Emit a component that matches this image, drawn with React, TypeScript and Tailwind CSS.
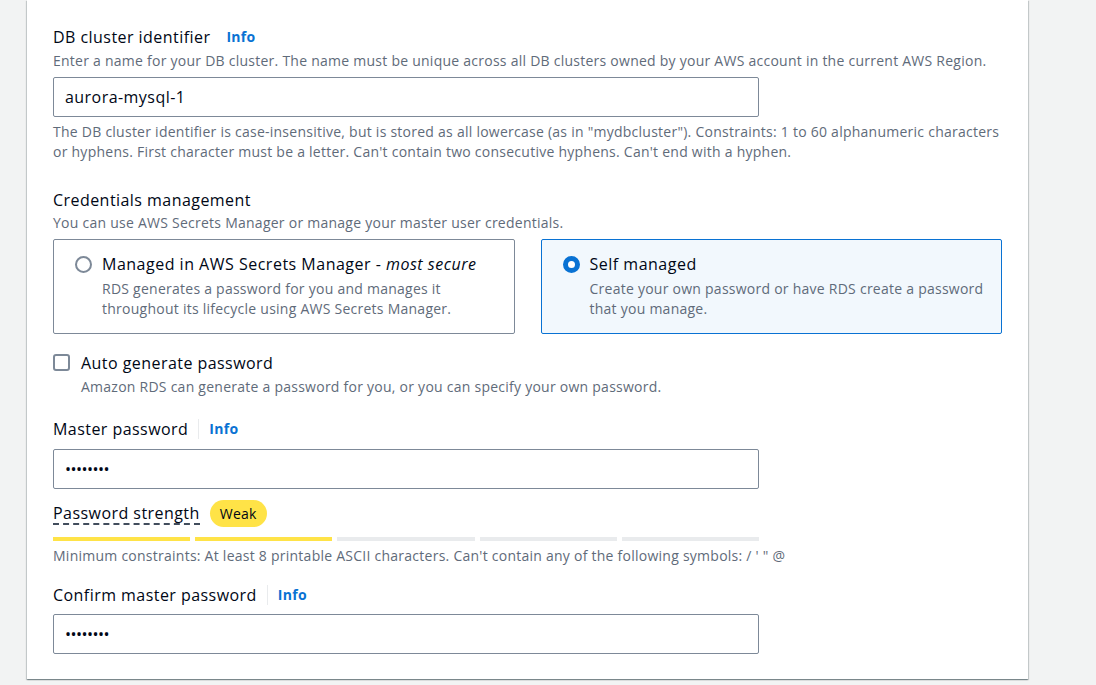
const font = { fontFamily: '"Open Sans", "Noto Sans", sans-serif' };

const Info = () => (
  <span className="text-[14px] font-bold tracking-[0.3px] text-[#0972d3] leading-[20px]">Info</span>
);

const Separator = () => <span className="mx-[10px] h-[20px] w-px bg-[#e9ebed]" />;

const PasswordInput = () => (
  <div className="flex h-[40px] w-[706px] items-center rounded-[2px] border border-[#7d8998] bg-white px-[11px]">
    <span className="text-[16px] leading-none tracking-[-0.5px] text-[#000716]">
      ••••••••
    </span>
  </div>
);

interface TileProps {
  selected: boolean;
  title: React.ReactNode;
  desc: string;
}

const Tile = ({ selected, title, desc }: TileProps) => (
  <div
    className={`flex h-[95px] flex-1 gap-[10px] rounded-[2px] border pl-[21px] pr-[12px] pt-[14px] ${
      selected ? "border-[#0972d3] bg-[#f2f8fd]" : "border-[#7d8998] bg-white"
    }`}>
    <div className="pt-[2px]">
      {selected ? (
        <span className="block h-[17px] w-[17px] rounded-full border-[5px] border-[#0972d3] bg-white" />
      ) : (
        <span className="block h-[17px] w-[17px] rounded-full border-2 border-[#7d8998] bg-white" />
      )}
    </div>
    <div className="flex flex-col">
      <p className="text-[16px] leading-[20px] tracking-[0.5px] text-[#000716]">{title}</p>
      <p className="mt-[5px] text-[14px] leading-[20px] tracking-[0.25px] text-[#5f6b7a]">{desc}</p>
    </div>
  </div>
);

export default function App() {
  const bars = [true, true, false, false, false];
  const label = "text-[16px] leading-[20px] tracking-[0.45px] text-[#000716]";
  const desc = "text-[14px] leading-[20px] tracking-[0.25px] text-[#5f6b7a]";

  return (
    <div className="min-h-[685px] bg-[#f2f3f3] pl-[27px] pr-[68px]" style={font}>
      <div className="bg-white px-[26px] pt-[26px] pb-[25px] shadow-[0_1px_1px_0_rgba(0,28,36,0.3),1px_1px_1px_0_rgba(0,28,36,0.15),-1px_1px_1px_0_rgba(0,28,36,0.15)]">
        {/* DB cluster identifier */}
        <div className="flex items-center gap-[16px]">
          <span className={`${label} leading-[22px]`}>DB cluster identifier</span>
          <Info />
        </div>
        <p className={`mt-[3px] ${desc}`}>
          Enter a name for your DB cluster. The name must be unique across all DB clusters owned by your AWS
          account in the current AWS Region.
        </p>
        <div className="mt-[6px] flex h-[40px] w-[706px] items-center rounded-[2px] border border-[#7d8998] px-[11px]">
          <span className="text-[16px] tracking-[0.45px] text-[#000716]">aurora-mysql-1</span>
        </div>
        <p className={`mt-[5px] ${desc}`}>
          The DB cluster identifier is case-insensitive, but is stored as all lowercase (as in "mydbcluster").
          Constraints: 1 to 60 alphanumeric characters or hyphens. First character must be a letter. Can't
          contain two consecutive hyphens. Can't end with a hyphen.
        </p>

        {/* Credentials management */}
        <p className={`mt-[28px] ${label}`}>Credentials management</p>
        <p className={`mt-[3px] ${desc}`}>
          You can use AWS Secrets Manager or manage your master user credentials.
        </p>
        <div className="mt-[6px] flex gap-[26px]">
          <Tile
            selected={false}
            title={
              <>
                Managed in AWS Secrets Manager - <i>most secure</i>
              </>
            }
            desc="RDS generates a password for you and manages it throughout its lifecycle using AWS Secrets Manager."
          />
          <Tile
            selected
            title="Self managed"
            desc="Create your own password or have RDS create a password that you manage."
          />
        </div>

        {/* Auto generate */}
        <div className="mt-[19px] flex gap-[11px]">
          <span className="mt-[1px] block h-[17px] w-[17px] rounded-[3px] border-2 border-[#7d8998]" />
          <div>
            <p className={label}>Auto generate password</p>
            <p className={`mt-[4px] ${desc}`}>
              Amazon RDS can generate a password for you, or you can specify your own password.
            </p>
          </div>
        </div>

        {/* Master password */}
        <div className="mt-[22px] flex items-center">
          <span className={label}>Master password</span>
          <Separator />
          <Info />
        </div>
        <div className="mt-[10px]">
          <PasswordInput />
        </div>
        <div className="mt-[11px] flex items-center gap-[10px]">
          <span className={`border-b-2 border-dashed border-[#414d5c] ${label}`}>Password strength</span>
          <span className="flex h-[27px] items-center rounded-full bg-[#ffe347] px-[10px] text-[14px] tracking-[0.25px] text-[#000716]">
            Weak
          </span>
        </div>
        <div className="mt-[10px] flex w-[706px] gap-[5px]">
          {bars.map((on, i) => (
            <div key={i} className={`h-[4px] flex-1 ${on ? "bg-[#ffe347]" : "bg-[#e9ebed]"}`} />
          ))}
        </div>
        <p className={`mt-[5px] ${desc}`}>
          Minimum constraints: At least 8 printable ASCII characters. Can't contain any of the following symbols: / ' " @
        </p>

        {/* Confirm */}
        <div className="mt-[19px] flex items-center">
          <span className={label}>Confirm master password</span>
          <Separator />
          <Info />
        </div>
        <div className="mt-[9px]">
          <PasswordInput />
        </div>
      </div>
    </div>
  );
}
